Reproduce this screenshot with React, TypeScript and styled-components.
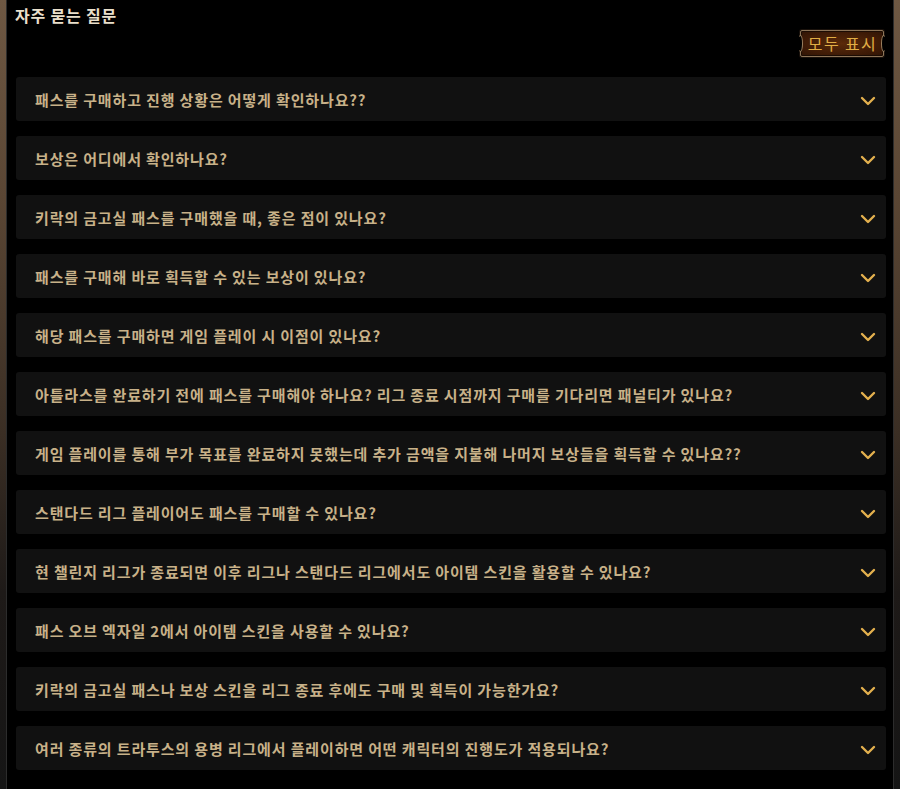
import styled, { createGlobalStyle } from "styled-components";

const GlobalStyle = createGlobalStyle`
  html, body {
    margin: 0;
    padding: 0;
    background: #000;
  }
  body {
    font-family: "Noto Sans CJK KR", "Noto Sans", sans-serif;
  }
`;

const Frame = styled.div`
  display: flex;
  width: 900px;
  height: 789px;
  background: #000;
  overflow: hidden;
`;

const Edge = styled.div<{ $side: "left" | "right" }>`
  flex: 0 0 7px;
  background: linear-gradient(
    180deg,
    #6e5843 0%,
    #5a4634 25%,
    #3a2e24 55%,
    #1e1a18 75%,
    #151515 100%
  );
  box-shadow: ${(p) =>
    p.$side === "left"
      ? "inset -1px 0 0 #2c2c2c"
      : "inset 1px 0 0 #2c2c2c"};
`;

const Content = styled.div`
  flex: 1;
  display: flex;
  flex-direction: column;
  padding: 4px 7px 0 8px;
`;

const Title = styled.h2`
  margin: 0;
  font-size: 16px;
  line-height: 22px;
  font-weight: 700;
  letter-spacing: 0.8px;
  color: #e9dfcb;
`;

const Toolbar = styled.div`
  display: flex;
  justify-content: flex-end;
  padding: 4px 2px 0 0;
`;

const ShowAll = styled.button`
  position: relative;
  width: 84px;
  height: 27px;
  padding: 0 0 1px 1px;
  border: 1px solid #8c7458;
  border-radius: 2px;
  background: radial-gradient(ellipse at center, #5a2a0a 0%, #3d1a06 70%, #2e1405 100%);
  box-shadow: inset 0 0 0 1px #1c0c03, 0 0 0 1px #1a120c;
  color: #e0ad45;
  font-family: "Noto Sans CJK KR", sans-serif;
  font-size: 16px;
  line-height: 24px;
  letter-spacing: 1.4px;
  white-space: nowrap;
  cursor: pointer;

  &::before,
  &::after {
    content: "";
    position: absolute;
    top: 4px;
    bottom: 4px;
    width: 3px;
    border: 1px solid #9a8060;
    border-radius: 50%;
    background: #000;
  }
  &::before {
    left: -3px;
    border-left-color: transparent;
  }
  &::after {
    right: -3px;
    border-right-color: transparent;
  }
`;

const List = styled.ul`
  list-style: none;
  margin: 20px 0 0;
  padding: 0 0 0 1px;
  display: flex;
  flex-direction: column;
  gap: 15px;
`;

const Item = styled.li`
  display: flex;
  align-items: center;
  justify-content: space-between;
  height: 44px;
  padding: 0 10px 0 19px;
  background: #111111;
  border-radius: 3px;
  cursor: pointer;
`;

const Question = styled.span`
  font-size: 15px;
  font-weight: 700;
  letter-spacing: 0.85px;
  color: #c8b189;
  white-space: nowrap;
`;

const ChevronIcon = styled.svg`
  margin-top: 3px;
  flex: 0 0 auto;
`;

const Chevron = () => (
  <ChevronIcon width="16" height="10" viewBox="0 0 16 10" aria-hidden="true">
    <path
      d="M2 2 L8 8 L14 2"
      fill="none"
      stroke="#e3b04e"
      strokeWidth="2.4"
      strokeLinecap="round"
      strokeLinejoin="round"
    />
  </ChevronIcon>
);

const questions = [
  "패스를 구매하고 진행 상황은 어떻게 확인하나요??",
  "보상은 어디에서 확인하나요?",
  "키락의 금고실 패스를 구매했을 때, 좋은 점이 있나요?",
  "패스를 구매해 바로 획득할 수 있는 보상이 있나요?",
  "해당 패스를 구매하면 게임 플레이 시 이점이 있나요?",
  "아틀라스를 완료하기 전에 패스를 구매해야 하나요? 리그 종료 시점까지 구매를 기다리면 패널티가 있나요?",
  "게임 플레이를 통해 부가 목표를 완료하지 못했는데 추가 금액을 지불해 나머지 보상들을 획득할 수 있나요??",
  "스탠다드 리그 플레이어도 패스를 구매할 수 있나요?",
  "현 챌린지 리그가 종료되면 이후 리그나 스탠다드 리그에서도 아이템 스킨을 활용할 수 있나요?",
  "패스 오브 엑자일 2에서 아이템 스킨을 사용할 수 있나요?",
  "키락의 금고실 패스나 보상 스킨을 리그 종료 후에도 구매 및 획득이 가능한가요?",
  "여러 종류의 트라투스의 용병 리그에서 플레이하면 어떤 캐릭터의 진행도가 적용되나요?",
];

export default function App() {
  return (
    <>
      <GlobalStyle />
      <Frame>
        <Edge $side="left" />
        <Content>
          <Title>자주 묻는 질문</Title>
          <Toolbar>
            <ShowAll type="button">모두 표시</ShowAll>
          </Toolbar>
          <List>
            {questions.map((q) => (
              <Item key={q}>
                <Question>{q}</Question>
                <Chevron />
              </Item>
            ))}
          </List>
        </Content>
        <Edge $side="right" />
      </Frame>
    </>
  );
}
